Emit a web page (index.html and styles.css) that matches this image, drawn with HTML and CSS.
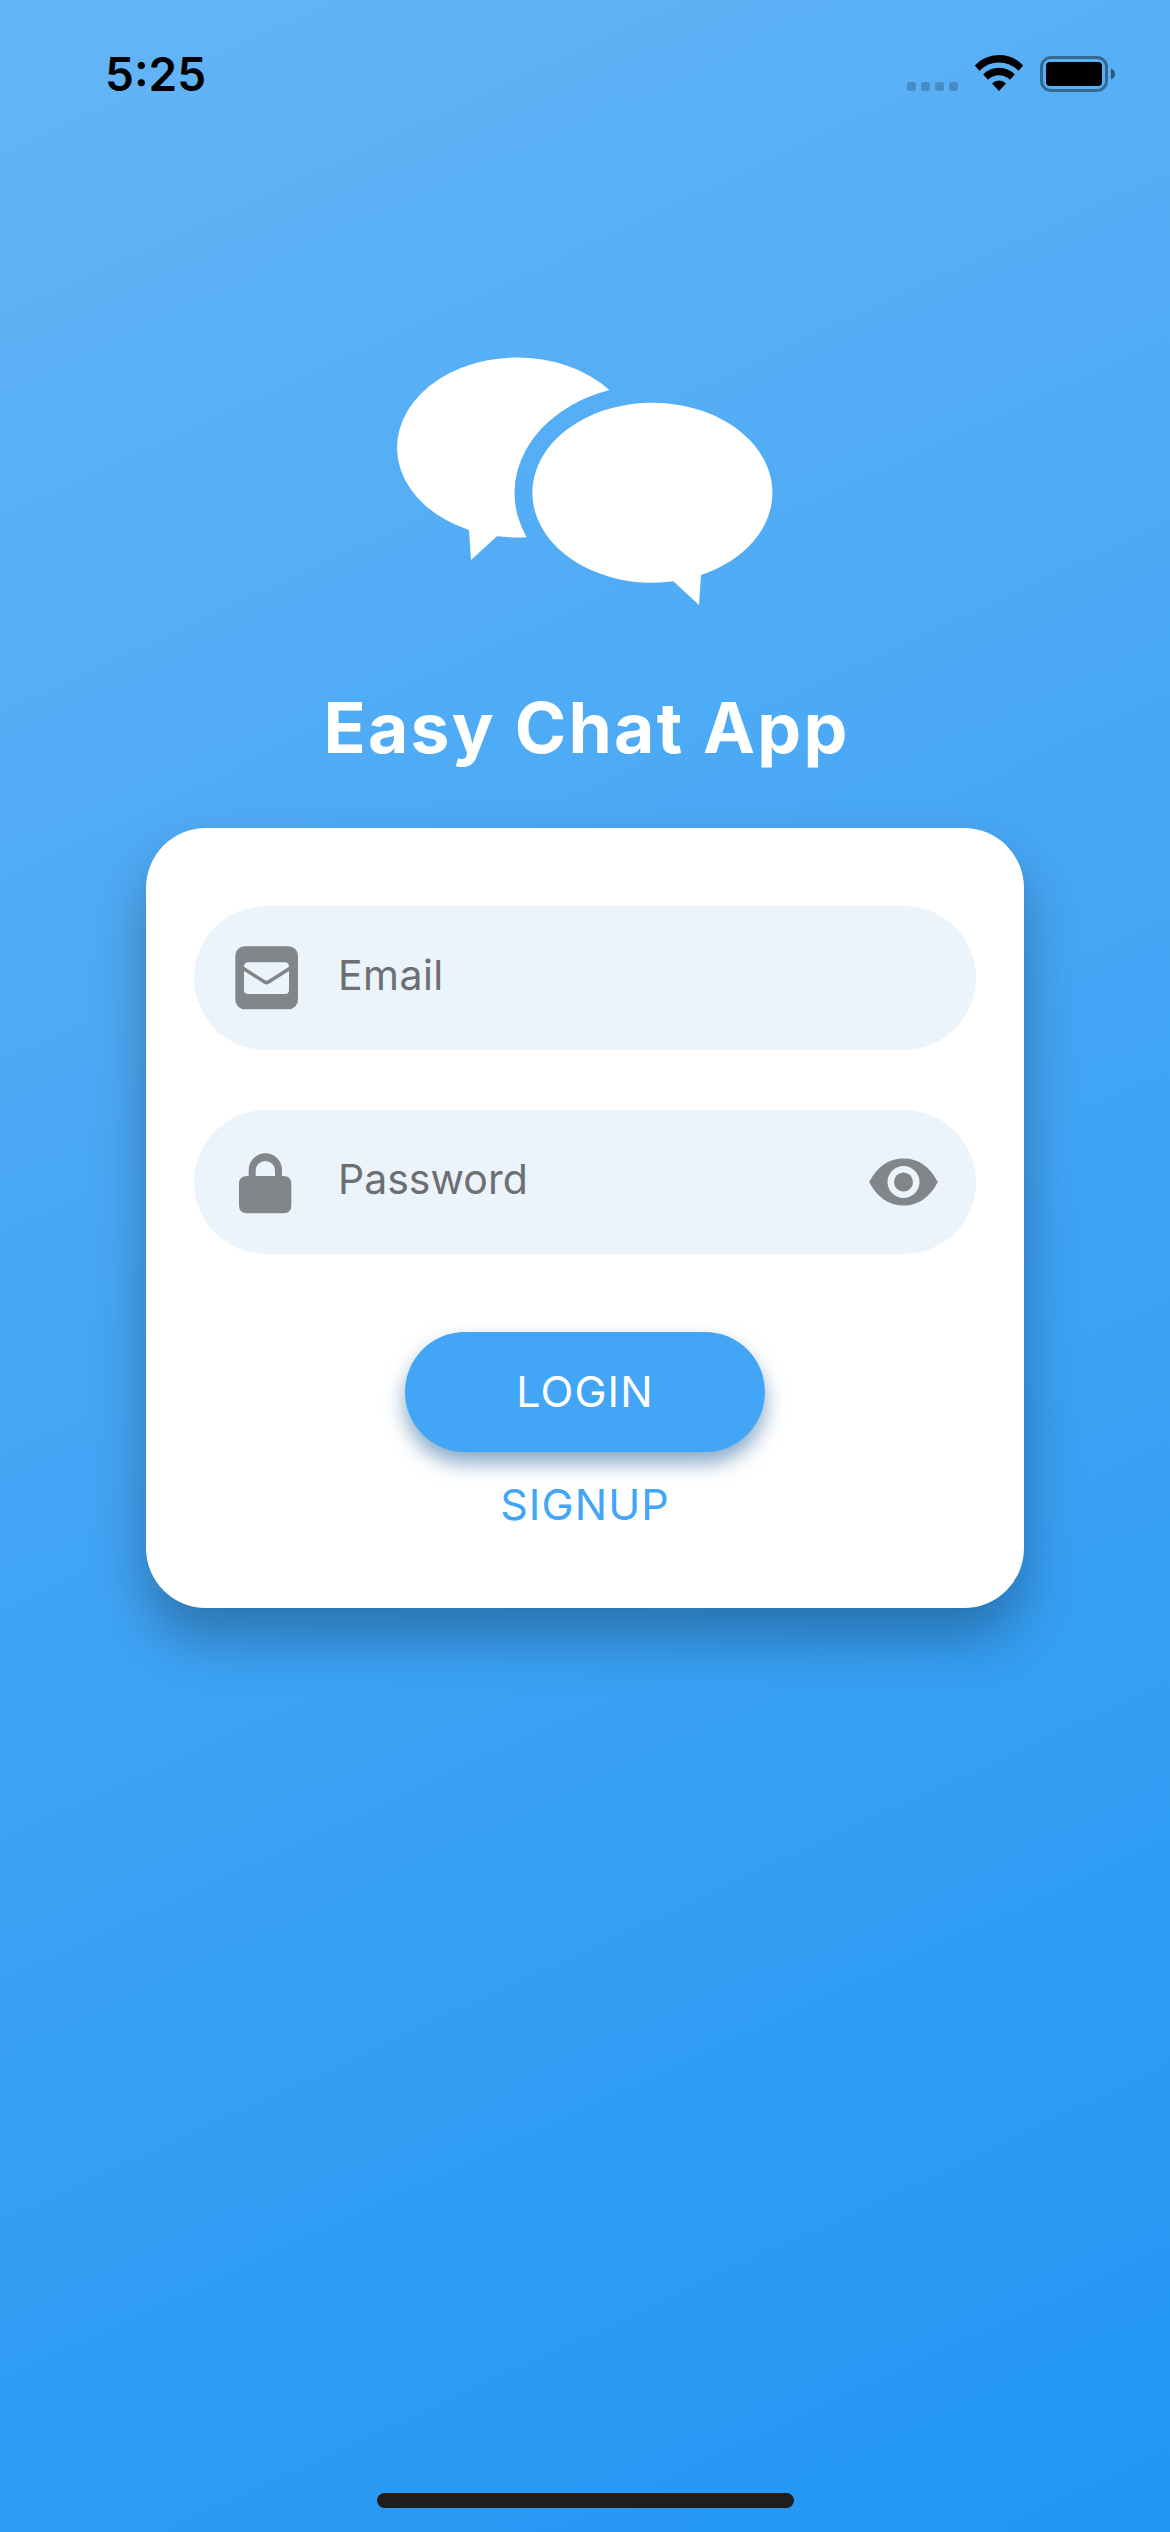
FILE: index.html
```html
<!DOCTYPE html>
<html lang="en">
<head>
<meta charset="utf-8">
<title>Easy Chat App</title>
<link rel="stylesheet" href="styles.css">
</head>
<body>
<div class="screen">
  <header class="status">
    <span class="time">5:25</span>
    <svg class="status-icons" width="210" height="40" viewBox="906 54 210 40" aria-hidden="true">
      <g fill="#000" fill-opacity=".2">
        <rect x="907" y="82" width="9" height="9" rx="2.7"/>
        <rect x="921" y="82" width="9" height="9" rx="2.7"/>
        <rect x="935" y="82" width="9" height="9" rx="2.7"/>
        <rect x="949" y="82" width="9" height="9" rx="2.7"/>
      </g>
      <path d="M974.8 65.6Q984.5 55 999 55Q1013.500 55 1023.200 65.600L1018.600 70.800Q1010.500 62.500 999 62.500Q987.500 62.500 979.400 70.800ZM983.200 74.600Q989.500 67.800 999 67.800Q1008.500 67.800 1014.800 74.600L1010 79.800Q1005.500 75.200 999 75.200Q992.500 75.200 988 79.800ZM992 83.600Q995 80.500 999 80.500Q1003 80.500 1006 83.600L999 91Z"/>
      <rect x="1041.500" y="57.500" width="65" height="33" rx="9.500" fill="none" stroke="#000" stroke-opacity=".4" stroke-width="3"/>
      <rect x="1046" y="62" width="56" height="24" rx="4"/>
      <path d="M1111 68.500Q1115 70.500 1115 74Q1115 77.500 1111 79.500Z" fill-opacity=".5"/>
    </svg>
  </header>
  <main class="content">
    <svg class="logo" viewBox="0 0 1230 840" fill="#fff" aria-hidden="true">
      <path d="M688 150A360 270 0 1 0 267 570L273 660L351 589Q395 594 440 592A414 325 0 0 1 688 150Z"/>
      <path d="M880 724A360 270 0 1 1 963 705L957 795Z"/>
    </svg>
    <h1 class="title">Easy Chat App</h1>
    <form class="card">
      <label class="field">
        <svg class="field-icon" viewBox="0 0 64 64" aria-hidden="true">
          <rect x=".3" y=".3" width="62.700" height="63" rx="9.500"/>
          <path class="cutout" d="M9 20.700C9 18 10.500 16.300 13 16.300H50C52.500 16.300 54 18 54 20.700L33.300 34Q31.500 35.200 29.700 34ZM9 25L29 37.700Q31.500 39.200 34 37.700L54 25V44Q54 48 50 48H13Q9 48 9 44Z"/>
        </svg>
        <span class="placeholder email">Email</span>
      </label>
      <label class="field">
        <svg class="field-icon" viewBox="0 0 64 64" aria-hidden="true">
          <path fill-rule="evenodd" d="M13.700 26V20A16.650 16.700 0 0 1 47 20V26H48.500Q56.300 26 56.300 34V55.500Q56.300 63.300 48.500 63.300H12Q4 63.300 4 55.500V34Q4 26 12 26ZM20.700 26H40V20.500A9.650 9.500 0 0 0 20.700 20.500Z"/>
        </svg>
        <span class="placeholder">Password</span>
        <svg class="eye" viewBox="0 0 69 48" aria-hidden="true">
          <path fill-rule="evenodd" d="M.2 24Q12.500 .5 34.500 .5T68.800 24Q56.500 47.500 34.500 47.500T.2 24ZM18.500 24A16 16 0 1 0 50.500 24A16 16 0 1 0 18.500 24Z"/>
          <circle cx="34.500" cy="24" r="9.500"/>
        </svg>
      </label>
      <button class="login" type="button">LOGIN</button>
      <a class="signup">SIGNUP</a>
    </form>
  </main>
  <div class="home-indicator"></div>
</div>
</body>
</html>
```
FILE: styles.css
```css
* { box-sizing: border-box; }

body {
  margin: 0;
  font-family: Inter, "Liberation Sans", sans-serif;
}

.screen {
  display: flex;
  flex-direction: column;
  align-items: center;
  width: 1170px;
  height: 2532px;
  padding-bottom: 24px;
  overflow: hidden;
  background: linear-gradient(155.2deg, #64b5f6 0%, #42a5f5 50%, #2196f3 100%);
}

.status {
  display: flex;
  justify-content: space-between;
  align-items: center;
  width: 100%;
  height: 148px;
  padding-left: 105px;
  padding-right: 54px;
}

.time {
  font-size: 46px;
  font-weight: 600;
  line-height: 60px;
  color: #000;
}

.content {
  display: flex;
  flex-direction: column;
  align-items: center;
  padding-top: 192px;
}

.logo {
  width: 410px;
  height: 280px;
}

.title {
  margin: 66px 0 58px;
  padding-left: 3px;
  font-size: 69.600px;
  line-height: 84px;
  font-weight: 650;
  letter-spacing: 2.250px;
  color: #fff;
  white-space: nowrap;
}

.card {
  display: flex;
  flex-direction: column;
  align-items: center;
  width: 877.500px;
  height: 780px;
  padding: 78px 48px 0;
  border-radius: 60px;
  background: #fff;
  box-shadow: 0 30px 54px rgba(0, 0, 0, .29);
}

.field {
  display: flex;
  align-items: center;
  width: 100%;
  height: 144px;
  margin-bottom: 60px;
  padding: 0 38px 0 40.750px;
  border-radius: 72px;
  background: #ebf3fb;
}

.field-icon {
  width: 64px;
  height: 64px;
  fill: #828589;
}

.cutout { fill: #ebf3fb; }

.placeholder {
  margin-left: 39px;
  padding-bottom: 6px;
  font-size: 41px;
  line-height: 50px;
  color: #6d6f72;
}

.email { letter-spacing: .450px; }

.eye {
  width: 69px;
  height: 48px;
  margin-left: auto;
  fill: #828589;
}

.login {
  width: 360px;
  height: 120px;
  margin-top: 18px;
  padding: 0 0 3px;
  border: 0;
  border-radius: 60px;
  background: #42a5f5;
  box-shadow: 0 11px 20px rgba(35, 98, 154, .55);
  color: #fff;
  font: 430 43px/54px Inter, "Liberation Sans", sans-serif;
  letter-spacing: 1.100px;
}

.signup {
  margin-top: 25px;
  font-size: 43px;
  font-weight: 430;
  line-height: 54px;
  letter-spacing: 1.100px;
  color: #42a5f5;
}

.home-indicator {
  width: 417px;
  height: 15px;
  margin-top: auto;
  border-radius: 7.500px;
  background: #1e1e1e;
}
```
